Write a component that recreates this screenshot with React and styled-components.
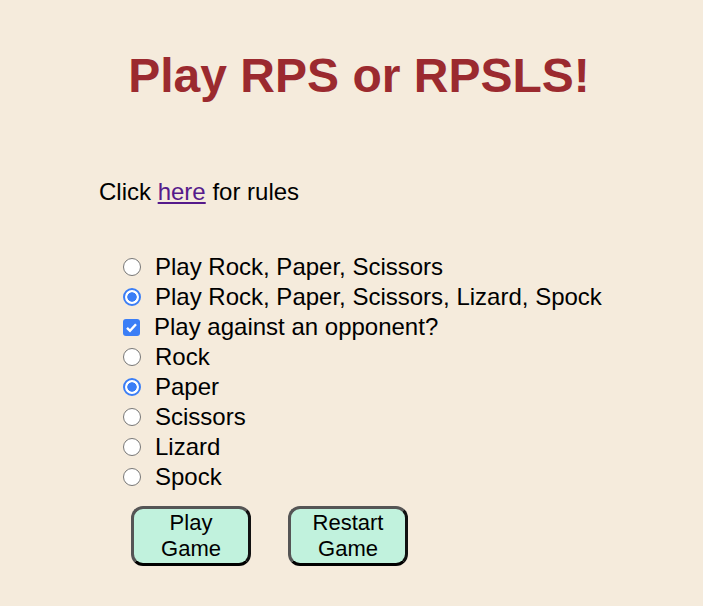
import React, { useState } from 'react'
import styled, { createGlobalStyle } from 'styled-components'

const GlobalStyle = createGlobalStyle`
  html, body {
    margin: 0;
    padding: 0;
    background: #f5ebdc;
  }
  body {
    font-family: "Liberation Sans", Arial, sans-serif;
    color: #000;
  }
`

const Page = styled.main`
  height: 606px;
  overflow: hidden;
  padding: 48px 0 0 99px;
  box-sizing: border-box;
`

const Title = styled.h1`
  margin: 0 0 0 -84px;
  font-size: 48px;
  line-height: 55px;
  font-weight: 700;
  color: #9b2a2f;
  text-align: center;
`

const Rules = styled.p`
  margin: 75px 0 0;
  font-size: 24px;
  line-height: 28px;
  a {
    color: #551a8b;
    text-decoration: underline;
  }
`

const Options = styled.div`
  margin-top: 46px;
  padding-left: 24px;
  display: flex;
  flex-direction: column;
`

const Row = styled.label`
  display: flex;
  align-items: center;
  gap: 14px;
  height: 30px;
  font-size: 24px;
  line-height: 30px;
  cursor: pointer;
`

const Radio = styled.input.attrs({ type: 'radio' })`
  appearance: none;
  width: 18px;
  height: 18px;
  margin: 0;
  flex: none;
  box-sizing: border-box;
  border-radius: 50%;
  border: 1.6px solid #777;
  background: #fff;
  &:checked {
    border: 2px solid #3b7ef6;
    background: radial-gradient(circle, #3b7ef6 0 4.4px, #fff 5px);
  }
`

const Check = styled.input.attrs({ type: 'checkbox' })`
  appearance: none;
  width: 17px;
  height: 17px;
  margin: 0;
  flex: none;
  box-sizing: border-box;
  border-radius: 3px;
  border: 1.5px solid #777;
  background: #fff;
  &:checked {
    border: none;
    background: #3b7ef6 url("data:image/svg+xml,%3Csvg xmlns='http://www.w3.org/2000/svg' viewBox='0 0 17 17'%3E%3Cpath d='M4 8.8l3 3 6-6.6' fill='none' stroke='white' stroke-width='2.4'/%3E%3C/svg%3E") center / 17px 17px no-repeat;
  }
`

const Buttons = styled.div`
  display: flex;
  gap: 37px;
  margin: 14px 0 0 32px;
`

const GameButton = styled.button`
  width: 120px;
  height: 60px;
  box-sizing: border-box;
  padding: 1px 4px;
  border: 3px solid;
  border-color: #555 #111 #000 #555;
  border-radius: 12px;
  background: #c1f2dd;
  font-family: "Liberation Sans", Arial, sans-serif;
  font-size: 22px;
  line-height: 26px;
  color: #000;
  cursor: pointer;
`

const modes = ['Play Rock, Paper, Scissors', 'Play Rock, Paper, Scissors, Lizard, Spock']
const moves = ['Rock', 'Paper', 'Scissors', 'Lizard', 'Spock']

export default function App() {
  const [mode, setMode] = useState(1)
  const [opponent, setOpponent] = useState(true)
  const [move, setMove] = useState('Paper')

  return (
    <Page>
      <GlobalStyle />
      <Title>Play RPS or RPSLS!</Title>
      <Rules>Click <a href="#rules">here</a> for rules</Rules>
      <Options>
        {modes.map((m, i) => (
          <Row key={m}>
            <Radio name="mode" checked={mode === i} onChange={() => setMode(i)} />
            {m}
          </Row>
        ))}
        <Row>
          <Check checked={opponent} onChange={e => setOpponent(e.target.checked)} />
          Play against an opponent?
        </Row>
        {moves.map(m => (
          <Row key={m}>
            <Radio name="move" checked={move === m} onChange={() => setMove(m)} />
            {m}
          </Row>
        ))}
      </Options>
      <Buttons>
        <GameButton>Play Game</GameButton>
        <GameButton>Restart Game</GameButton>
      </Buttons>
    </Page>
  )
}
